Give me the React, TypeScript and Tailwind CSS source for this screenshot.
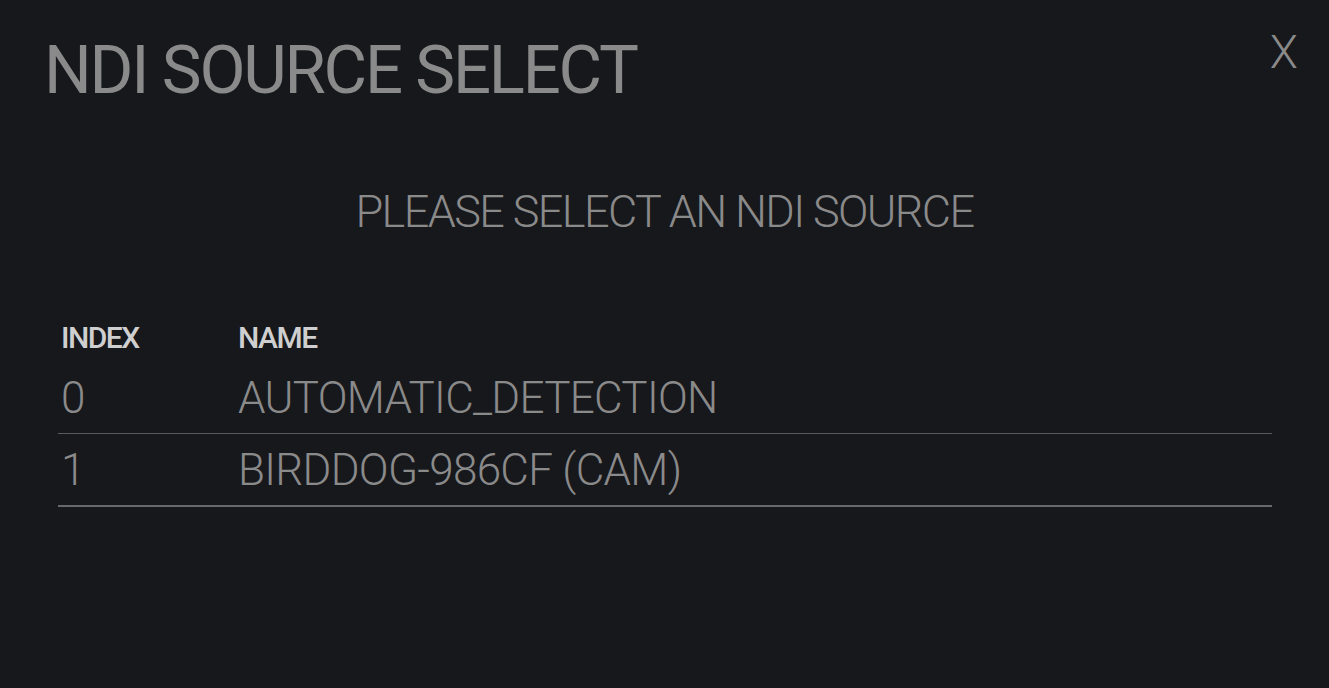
import React from "react";

const rows = [
  { index: "0", name: "AUTOMATIC_DETECTION" },
  { index: "1", name: "BIRDDOG-986CF (CAM)" },
];

export default function App() {
  return (
    <div
      className="w-[1329px] h-[688px] bg-[#17181c] overflow-hidden flex flex-col"
      style={{ fontFamily: "Roboto, 'Liberation Sans', sans-serif" }}
    >
      <div className="flex justify-between items-start pl-[44px] pr-[31px] pt-[30px]">
        <h1 className="text-[67px] leading-[80px] font-normal text-[#8a8a8a] tracking-[-2.2px]">
          NDI SOURCE SELECT
        </h1>
        <button className="text-[46px] leading-[50px] font-light text-[#8a8a8a] mt-[-3px]">
          X
        </button>
      </div>
      <div className="flex justify-center mt-[76px]">
        <p className="text-[45px] leading-[52px] font-light text-[#8a8a8a] tracking-[-1.6px]">
          PLEASE SELECT AN NDI SOURCE
        </p>
      </div>
      <div className="mx-[58px] mt-[74px] w-[1214px]">
        <div className="flex h-[50px] items-center pl-[3px] text-[30px] font-medium text-[#cfcfcf] tracking-[-1.5px]">
          <div className="w-[177px]">INDEX</div>
          <div>NAME</div>
        </div>
        <div className="flex h-[72px] items-center pl-[3px] border-b border-[#5a5a5c] text-[44px] font-light text-[#8a8a8a] tracking-[-0.7px]">
          <div className="w-[177px]">{rows[0].index}</div>
          <div>{rows[0].name}</div>
        </div>
        <div className="flex h-[73px] items-center pl-[3px] border-b-2 border-[#68686a] text-[44px] font-light text-[#8a8a8a] tracking-[-0.7px]">
          <div className="w-[177px]">{rows[1].index}</div>
          <div>{rows[1].name}</div>
        </div>
      </div>
    </div>
  );
}
